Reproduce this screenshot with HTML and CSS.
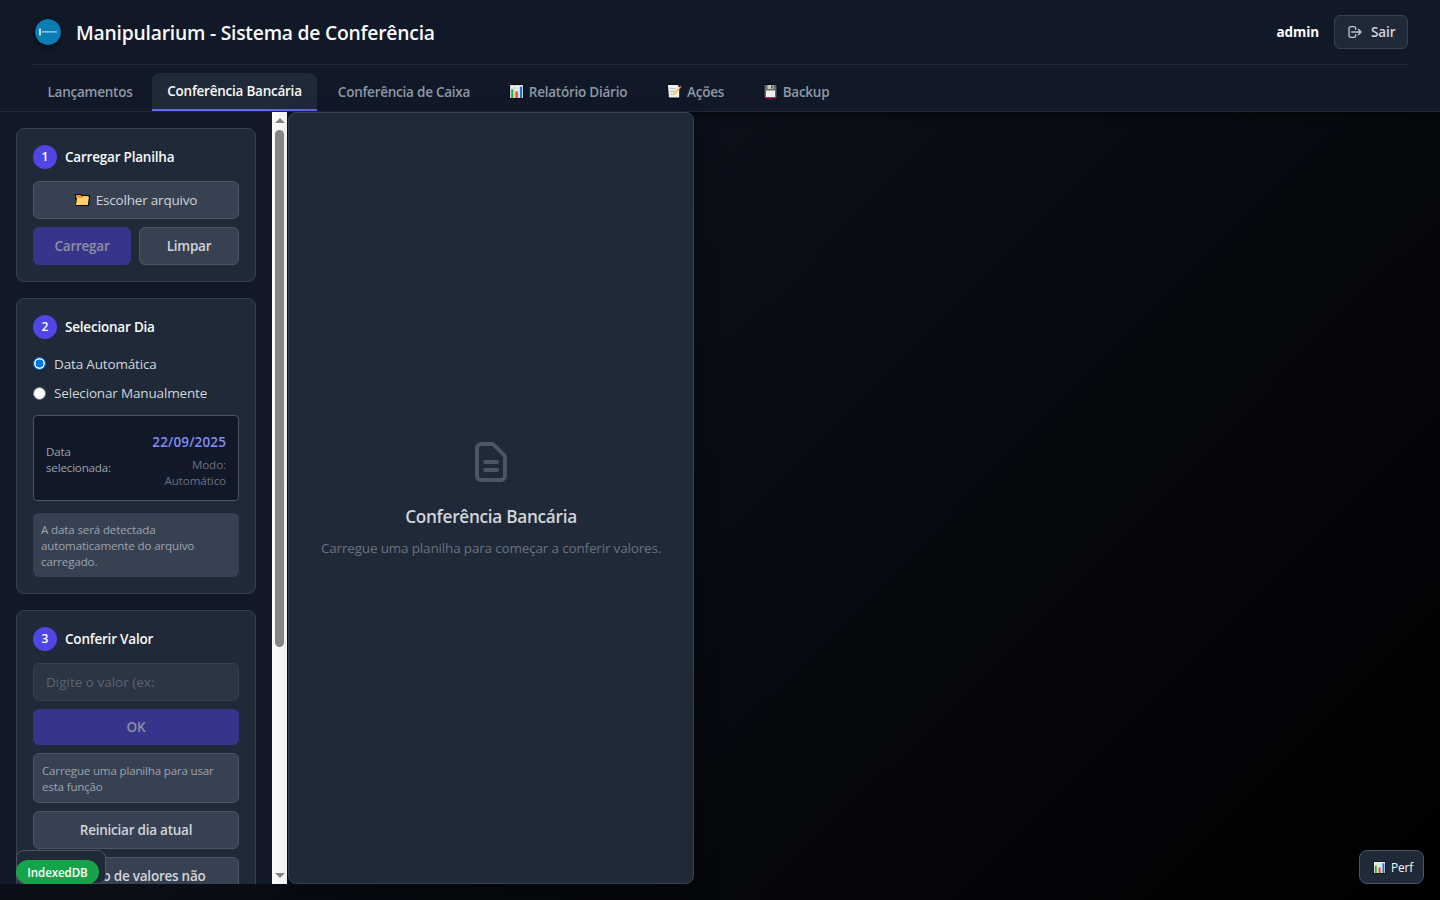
FILE: index.html
```html
<!DOCTYPE html>
<html lang="pt-BR">
<head>
<meta charset="utf-8">
<title>Manipularium - Sistema de Conferência</title>
<link rel="stylesheet" href="styles.css">
</head>
<body>
<svg width="0" height="0" class="defs">
  <symbol id="chart" viewBox="0 0 14 14"><rect width="14" height="14" rx="1" fill="#080a0e"/><rect x="1" y="1" width="12" height="12" fill="#eee"/><path d="M1 4h12M1 7h12M1 10h12M5 1v12M9 1v12" stroke="#ccc" stroke-width=".5"/><path d="M2 5h2v8H2z" fill="#16b52b"/><path d="M6 7h2.2v6H6z" fill="#ef4423"/><path d="M10.200 2.500h2v10.500h-2z" fill="#0878d4"/></symbol>
  <symbol id="note" viewBox="0 0 16 16"><path d="M0 0h13v4l2 0-2 3v9H1z" fill="#080a0e"/><path d="M1 1h11v2h1v11.500H2z" fill="#f0f0f0"/><path d="M3 5h6M3 8h5M3 11h3" stroke="#aaa" stroke-width=".8"/><path d="M7 11.500l7-8" stroke="#f8c13c" stroke-width="1.900"/><path d="M14 3.500l1-1" stroke="#e36b77" stroke-width="1.800"/></symbol>
  <symbol id="disk" viewBox="0 0 14 15"><rect width="14" height="15" rx="1" fill="#080a0e"/><path d="M1 1h12v13H1z" fill="#66696e"/><path d="M4 1h6v4H4z" fill="#c8cace"/><path d="M7.500 1.500h1.500v3H7.500z" fill="#555"/><path d="M2.500 6.500h9V13h-9z" fill="#eee"/><path d="M2 13h10v1.500H2z" fill="#c5145b"/></symbol>
  <symbol id="folder" viewBox="0 0 15 12"><path d="M0 0h6l1 1h8v4l-1 7H1z" fill="#080a0e"/><path d="M1 1h4.500l1 1H13v2H1z" fill="#e59b28"/><path d="M1 10.500l1-6.500h5l1.500-1.500H14L12.800 11H1z" fill="#ffd16b"/></symbol>
</svg>
<header class="header">
  <div class="topbar">
    <svg class="logo" viewBox="0 0 26 26"><circle cx="13" cy="13" r="13" fill="#0c7cb5"/><path d="M5 9.500v7" stroke="#dceff8" stroke-width="1.700"/><path d="M7 12.800h15" stroke="#c6e3f1" stroke-width="1.300" stroke-dasharray="2.500 .3 1 .3"/></svg>
    <h1 class="title">Manipularium - Sistema de Conferência</h1>
    <span class="user">admin</span>
    <button class="logout"><svg class="exit" viewBox="0 0 24 24"><path d="M17 16l4-4m0 0l-4-4m4 4H7m6 4v1a3 3 0 0 1-3 3H6a3 3 0 0 1-3-3V7a3 3 0 0 1 3-3h4a3 3 0 0 1 3 3v1"/></svg><span>Sair</span></button>
  </div>
  <nav class="tabs">
    <a class="tab t1">Lançamentos</a>
    <a class="tab t2 active">Conferência Bancária</a>
    <a class="tab t3">Conferência de Caixa</a>
    <a class="tab t4"><svg class="emoji"><use href="#chart"/></svg><span>Relatório Diário</span></a>
    <a class="tab t5"><svg class="emoji"><use href="#note"/></svg><span>Ações</span></a>
    <a class="tab t6"><svg class="emoji"><use href="#disk"/></svg><span>Backup</span></a>
  </nav>
</header>
<main class="main">
  <aside class="sidebar">
    <div class="cards">
      <section class="card">
        <h2 class="step"><i class="num">1</i><span>Carregar Planilha</span></h2>
        <div class="btn file"><svg class="folder"><use href="#folder"/></svg><span>Escolher arquivo</span></div>
        <div class="pair"><button class="btn primary">Carregar</button><button class="btn">Limpar</button></div>
      </section>
      <section class="card">
        <h2 class="step"><i class="num">2</i><span>Selecionar Dia</span></h2>
        <div class="radios">
          <label class="radio"><i class="dot on"></i>Data Automática</label>
          <label class="radio"><i class="dot"></i>Selecionar Manualmente</label>
        </div>
        <div class="datebox">
          <div class="datelabel">Data<br>selecionada:</div>
          <div class="dateval"><b class="date">22/09/2025</b><span class="mode">Modo:<br>Automático</span></div>
        </div>
        <div class="hint">A data será detectada<br>automaticamente do arquivo<br>carregado.</div>
      </section>
      <section class="card">
        <h2 class="step"><i class="num">3</i><span>Conferir Valor</span></h2>
        <div class="input">Digite o valor (ex:</div>
        <button class="btn primary ok">OK</button>
        <div class="hint bordered">Carregue uma planilha para usar<br>esta função</div>
        <button class="btn reset">Reiniciar dia atual</button>
        <button class="btn tall">Gestão de valores não<br>encontrados no extrato (0)</button>
      </section>
    </div>
    <div class="scroll"><i class="arrow up"></i><i class="thumb"></i><i class="arrow down"></i></div>
    <div class="dbbox"><span class="db">IndexedDB</span></div>
  </aside>
  <section class="panel">
    <svg class="doc" viewBox="0 0 24 24"><path d="M9 12h6m-6 4h6m2 5H7a2 2 0 0 1-2-2V5a2 2 0 0 1 2-2h5.586a1 1 0 0 1 .707.293l5.414 5.414a1 1 0 0 1 .293.707V19a2 2 0 0 1-2 2z" transform="translate(0 0)"/></svg>
    <h3 class="ptitle">Conferência Bancária</h3>
    <p class="ptext">Carregue uma planilha para começar a conferir valores.</p>
  </section>
</main>
<button class="perf"><svg class="chart"><use href="#chart"/></svg><span>Perf</span></button>
</body>
</html>
```

FILE: styles.css
```css
* { box-sizing: border-box; }
body { margin: 0; height: 900px; overflow: hidden; background: linear-gradient(135deg, #111827, #000); font-family: "Open Sans", "Noto Sans", sans-serif; font-size: 13.5px; color: #d1d5db; }
h1, h2, h3, p { margin: 0; }
i { font-style: normal; }
button { font-family: inherit; }
.defs { position: absolute; }
.header { height: 112px; background: #111827; border-bottom: 1px solid #1f2937; padding: 0 32px; box-shadow: 0 4px 6px #0005; }
.topbar { height: 65px; border-bottom: 1px solid #1f2937; display: flex; align-items: center; }
.logo { width: 26px; height: 26px; margin-left: 3px; border-radius: 50%; box-shadow: 0 3px 6px #0005; }
.title { margin-left: 15px; padding-top: 1px; font-size: 19.3px; font-weight: 600; color: #f9fafb; letter-spacing: -.22px; line-height: 28px; flex: 1; white-space: nowrap; }
.user { font-weight: 700; color: #fff; letter-spacing: -.1px; margin-right: 15px; padding-bottom: 1px; }
.logout { width: 74px; height: 34px; border: 1px solid #374151; border-radius: 6px; background: #1f2937; color: #d1d5db; font-size: 13.5px; font-weight: 600; display: flex; align-items: center; gap: 8px; padding: 0 12px 1px; letter-spacing: -.1px; }
.exit { width: 16px; height: 16px; fill: none; stroke: #c3c8cf; stroke-width: 2; stroke-linecap: round; stroke-linejoin: round; flex: none; }
.tabs { display: flex; gap: 4px; height: 46px; padding-top: 8px; }
.tab { height: 38px; display: flex; align-items: center; justify-content: center; font-weight: 600; color: #8f98a6; border-radius: 8px 8px 0 0; white-space: nowrap; letter-spacing: -.24px; padding-bottom: 1px; }
.active { background: #1f2937; color: #f9fafb; border-bottom: 2px solid #6366f1; }
.t1 { width: 116px; }
.t2 { width: 165px; }
.t3 { width: 166px; }
.t4 { width: 154px; }
.t5 { width: 93px; }
.t6 { width: 100px; }
.emoji { width: 15px; height: 15px; margin-right: 5px; flex: none; }
.main { display: flex; height: 772px; position: relative; }
.sidebar { position: relative; width: 288px; display: flex; background: linear-gradient(90deg, #111827 287px, transparent 287px); overflow: hidden; }
.cards { width: 272px; padding: 16px; display: flex; flex-direction: column; gap: 16px; height: 772px; overflow: hidden; }
.card { flex: none; border: 1px solid #374151; border-radius: 8px; background: #1f2937; padding: 16px; display: flex; flex-direction: column; gap: 8px; }
.step { display: flex; align-items: center; gap: 8px; height: 24px; margin-bottom: 4px; font-size: 13.5px; font-weight: 600; color: #f9fafb; letter-spacing: -.21px; }
.num { width: 24px; height: 24px; border-radius: 50%; background: #4f46e5; font-size: 12px; text-align: center; line-height: 24px; letter-spacing: 0; color: #fff; }
.btn { height: 38px; border: 1px solid #4b5563; border-radius: 6px; background: #374151; color: #d1d5db; font-size: 13.5px; font-weight: 600; letter-spacing: -.24px; display: flex; align-items: center; justify-content: center; padding: 0 0 1px; white-space: nowrap; }
.file { font-weight: 400; letter-spacing: -.19px; }
.folder { width: 15px; height: 12px; margin-right: 6px; margin-top: 1px; }
.pair { display: grid; grid-template-columns: 98px 100px; gap: 8px; }
.primary { background: #37358b; border-color: #37358b; color: #8f8fa0; }
.radios { height: 54px; padding-top: 3px; display: flex; flex-direction: column; gap: 9px; margin-bottom: 2px; }
.radio { height: 20px; display: flex; align-items: center; gap: 8px; line-height: 20px; letter-spacing: -.16px; }
.dot { width: 13px; height: 13px; border-radius: 50%; border: 1px solid #767676; background: #fff; }
.on { border: 1.500px solid #0075d7; margin-top: -1px; background: #0075d7; box-shadow: inset 0 0 0 1.500px #fff; }
.datebox { height: 86px; margin-bottom: 4px; background: #111827; border: 1px solid #4b5563; border-radius: 4px; padding: 0 12px; display: flex; align-items: center; justify-content: space-between; font-size: 11.6px; line-height: 16px; color: #9ca3af; letter-spacing: -.18px; }
.datelabel { padding-top: 3px; }
.dateval { text-align: right; display: flex; flex-direction: column; gap: 5px; padding-top: 5px; }
.date { font-size: 13.5px; line-height: 19px; font-weight: 600; color: #818cf8; letter-spacing: .14px; }
.mode { color: #6b7280; letter-spacing: -.08px; }
.hint { background: #374151; border-radius: 6px; padding: 9px 8px 7px; font-size: 11.6px; line-height: 16px; color: #9ca3af; letter-spacing: -.15px; white-space: nowrap; }
.bordered { border: 1px solid #4b5563; letter-spacing: -.19px; }
.input { height: 38px; border: 1px solid #353f4d; border-radius: 6px; background: #2b3543; color: #5b6471; padding: 0 12px; line-height: 36px; }
.ok { height: 36px; }
.tall { height: 58px; line-height: 15px; align-items: flex-start; padding-top: 11px; }
.scroll { position: relative; width: 15px; height: 772px; background: linear-gradient(90deg, #fcfcfc, #f0f0f0); display: flex; flex-direction: column; align-items: center; padding: 6px 0; }
.arrow { border: 5px solid transparent; height: 0; width: 0; }
.up { border-top: 0; border-bottom-color: #858585; }
.down { margin-top: auto; border-bottom: 0; border-top-color: #858585; }
.thumb { width: 9px; height: 517px; margin-top: 7px; border-radius: 5px; background: #858585; }
.dbbox { position: absolute; left: 16px; bottom: 0; width: 90px; height: 34px; border: 1px solid #4b5563; border-radius: 8px; background: #1f2937; }
.db { position: absolute; left: -1px; top: 9px; width: 83px; height: 24px; border-radius: 12px; background: #16a34a; color: #fff; font-size: 11.6px; font-weight: 600; line-height: 25px; text-align: center; letter-spacing: -.1px; }
.panel { width: 406px; border: 1px solid #374151; border-radius: 8px; background: #1f2937; display: flex; flex-direction: column; align-items: center; padding-top: 325px; box-shadow: 0 10px 25px #0006; }
.doc { width: 48px; height: 48px; fill: none; stroke: #4b5563; stroke-width: 2; stroke-linecap: round; stroke-linejoin: round; }
.ptitle { margin-top: 17px; font-size: 17.2px; line-height: 28px; font-weight: 600; color: #d1d5db; letter-spacing: -.28px; }
.ptext { margin-top: 7px; line-height: 20px; color: #6b7280; letter-spacing: -.17px; white-space: nowrap; }
.perf { position: absolute; left: 1359px; top: 850px; width: 65px; height: 34px; border: 1px solid #4b5563; border-radius: 8px; background: #1f2937; color: #f9fafb; font-size: 11.8px; display: flex; align-items: center; padding: 0 13px; gap: 5px; letter-spacing: -.1px; }
.chart { width: 13px; height: 13px; flex: none; }
```
